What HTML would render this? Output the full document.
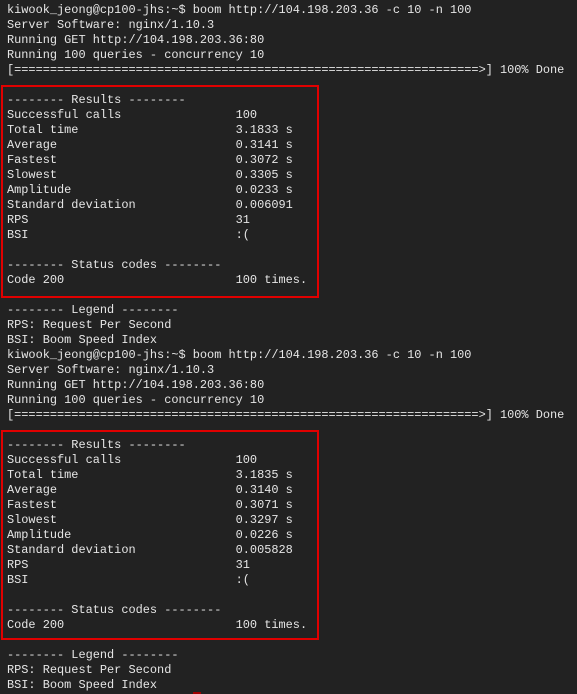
<!DOCTYPE html>
<html><head><meta charset="utf-8"><style>
html,body{margin:0;padding:0;background:#222222;width:577px;height:694px;overflow:hidden}
pre{position:absolute;left:7px;top:3px;margin:0;font-family:"Liberation Mono",monospace;font-size:11.92px;line-height:15px;color:#e6e6e6}
.box{position:absolute;border:2px solid #e00000;box-sizing:border-box}
</style></head><body>
<pre>kiwook_jeong@cp100-jhs:~$ boom http://104.198.203.36 -c 10 -n 100
Server Software: nginx/1.10.3
Running GET http://104.198.203.36:80
Running 100 queries - concurrency 10
[=================================================================>] 100% Done

-------- Results --------
Successful calls                100
Total time                      3.1833 s
Average                         0.3141 s
Fastest                         0.3072 s
Slowest                         0.3305 s
Amplitude                       0.0233 s
Standard deviation              0.006091
RPS                             31
BSI                             :(

-------- Status codes --------
Code 200                        100 times.

-------- Legend --------
RPS: Request Per Second
BSI: Boom Speed Index
kiwook_jeong@cp100-jhs:~$ boom http://104.198.203.36 -c 10 -n 100
Server Software: nginx/1.10.3
Running GET http://104.198.203.36:80
Running 100 queries - concurrency 10
[=================================================================>] 100% Done

-------- Results --------
Successful calls                100
Total time                      3.1835 s
Average                         0.3140 s
Fastest                         0.3071 s
Slowest                         0.3297 s
Amplitude                       0.0226 s
Standard deviation              0.005828
RPS                             31
BSI                             :(

-------- Status codes --------
Code 200                        100 times.

-------- Legend --------
RPS: Request Per Second
BSI: Boom Speed Index</pre>
<div class="box" style="left:1px;top:85px;width:318px;height:213px"></div>
<div class="box" style="left:1px;top:430px;width:318px;height:210px"></div>
<div style="position:absolute;left:193px;top:692px;width:8px;height:2px;background:#a00000"></div>
</body></html>
